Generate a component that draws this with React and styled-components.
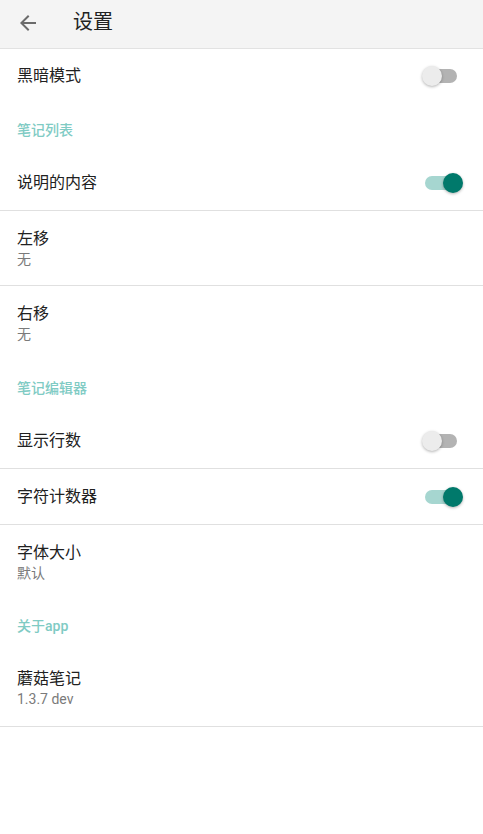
import React from "react";
import styled, { createGlobalStyle } from "styled-components";

const Global = createGlobalStyle`
  html, body { margin: 0; padding: 0; background: #fff; }
  body { font-family: Roboto, "Noto Sans CJK SC", sans-serif; -webkit-font-smoothing: antialiased; }
  * { box-sizing: border-box; }
`;

const Page = styled.div`
  width: 483px;
  min-height: 834px;
  background: #fff;
  display: flex;
  flex-direction: column;
`;

const Toolbar = styled.header`
  height: 49px;
  background: #f4f4f4;
  border-bottom: 1px solid #e2e2e2;
  display: flex;
  align-items: center;
  padding-left: 16px;
`;

const BackIcon = styled.svg`
  width: 24px;
  height: 24px;
  fill: #6b6b6b;
  margin-top: -2px;
`;

const Title = styled.h1`
  margin: 0 0 0 33px;
  font-size: 20px;
  font-weight: 400;
  color: #222;
  line-height: 24px;
  margin-top: -4px;
`;

const Row = styled.div`
  display: flex;
  align-items: center;
  justify-content: space-between;
  min-height: ${(p) => p.$height}px;
  padding: 0 26px 0 17px;
  border-bottom: ${(p) => (p.$divider ? "1px solid #e0e0e0" : "none")};
  box-sizing: content-box;
`;

const Texts = styled.div`
  display: flex;
  flex-direction: column;
`;

const RowTitle = styled.div`
  font-size: 16px;
  line-height: 22px;
  color: #212121;
`;

const RowSub = styled.div`
  font-size: 14px;
  line-height: 20px;
  color: #7a7a7a;
  margin-top: -1px;
`;

const Section = styled.div`
  height: 52px;
  padding: 17px 17px 0;
  font-size: 14px;
  line-height: 20px;
  font-weight: 500;
  color: #80cbc4;
`;

const Track = styled.div`
  position: relative;
  width: 32px;
  height: 14px;
  border-radius: 7px;
  background: ${(p) => (p.$on ? "#a6d6d0" : "#b3b3b3")};
`;

const Thumb = styled.div`
  position: absolute;
  top: -3px;
  left: ${(p) => (p.$on ? "18px" : "-3px")};
  width: 20px;
  height: 20px;
  border-radius: 50%;
  background: ${(p) => (p.$on ? "#00796b" : "#ececec")};
  box-shadow: 0 1px 3px rgba(0, 0, 0, 0.3);
`;

const Switch = ({ on }) => (
  <Track $on={on}>
    <Thumb $on={on} />
  </Track>
);

const Item = ({ title, sub, toggle, divider, height }) => (
  <Row $height={height || (sub ? 74 : 55)} $divider={divider}>
    <Texts>
      <RowTitle>{title}</RowTitle>
      {sub && <RowSub>{sub}</RowSub>}
    </Texts>
    {toggle !== undefined && <Switch on={toggle} />}
  </Row>
);

export default function App() {
  return (
    <Page>
      <Global />
      <Toolbar>
        <BackIcon viewBox="0 0 24 24">
          <path d="M20 11H7.83l5.59-5.59L12 4l-8 8 8 8 1.41-1.41L7.83 13H20v-2z" />
        </BackIcon>
        <Title>设置</Title>
      </Toolbar>
      <Item title="黑暗模式" toggle={false} height={54} />
      <Section>笔记列表</Section>
      <Item title="说明的内容" toggle={true} divider />
      <Item title="左移" sub="无" divider />
      <Item title="右移" sub="无" height={75} />
      <Section>笔记编辑器</Section>
      <Item title="显示行数" toggle={false} divider />
      <Item title="字符计数器" toggle={true} divider />
      <Item title="字体大小" sub="默认" />
      <Section>关于app</Section>
      <Item title="蘑菇笔记" sub="1.3.7 dev" divider height={75} />
    </Page>
  );
}
